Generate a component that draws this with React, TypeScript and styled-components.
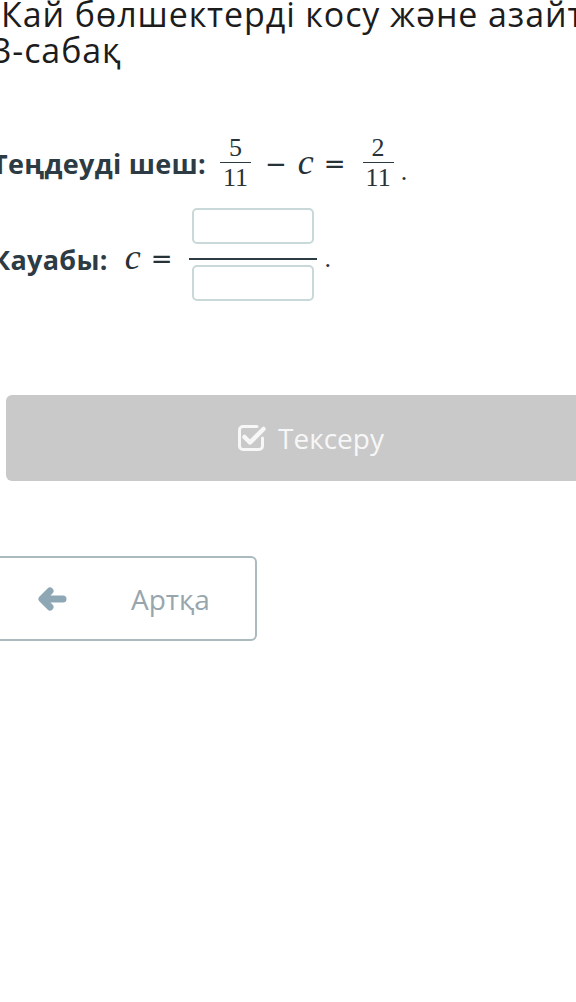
import styled, { createGlobalStyle } from 'styled-components';

const GlobalStyle = createGlobalStyle`
  html, body {
    margin: 0;
    padding: 0;
    background: #ffffff;
    overflow: hidden;
  }
  body {
    font-family: "Open Sans", "Noto Sans", sans-serif;
  }
`;

const Page = styled.div`
  width: 640px;
  margin-left: -8px;
  margin-top: -4px;
`;

const Title = styled.h1`
  margin: 0;
  font-size: 34px;
  line-height: 36px;
  font-weight: 400;
  color: #1c1c1c;
  text-indent: 9px;
  letter-spacing: 0.9px;
`;

const NoWrap = styled.span`
  white-space: nowrap;
`;

const Task = styled.div<{ $top: number }>`
  display: flex;
  align-items: center;
  margin-top: ${(p) => p.$top}px;
`;

const Label = styled.span`
  font-weight: 700;
  font-size: 27px;
  letter-spacing: 0.3px;
  color: #2d3b45;
`;

const Math = styled.span`
  display: inline-flex;
  align-items: center;
  font-family: "Liberation Serif", "DejaVu Serif", serif;
  font-size: 26px;
  color: #263238;
`;

const Var = styled.span<{ $left: number; $right: number }>`
  font-style: italic;
  font-size: 36px;
  line-height: 36px;
  margin: -4px ${(p) => p.$right}px 0 ${(p) => p.$left}px;
`;

const Op = styled.span<{ $right: number }>`
  font-family: "DejaVu Sans", sans-serif;
  font-size: 26px;
  line-height: 30px;
  margin-right: ${(p) => p.$right}px;
`;

const Frac = styled.span<{ $left: number; $right: number }>`
  display: inline-flex;
  flex-direction: column;
  align-items: center;
  margin: 0 ${(p) => p.$right}px 0 ${(p) => p.$left}px;
`;

const Num = styled.span`
  line-height: 22px;
  padding: 0 3px 3px;
`;

const Bar = styled.span<{ $thick: number }>`
  align-self: stretch;
  border-top: ${(p) => p.$thick}px solid #2d3b45;
`;

const Den = styled.span`
  line-height: 24px;
  padding: 3px 3px 0;
`;

const Dot = styled.span<{ $down: number }>`
  font-size: 26px;
  line-height: 20px;
  transform: translateY(${(p) => p.$down}px);
`;

const AnswerFrac = styled.span`
  display: inline-flex;
  flex-direction: column;
  align-items: center;
  width: 128px;
  margin: 0 7px 0 0;
`;

const AnswerBox = styled.input<{ $below: number; $above: number }>`
  box-sizing: border-box;
  width: 122px;
  height: 36px;
  margin: ${(p) => p.$above}px 0 ${(p) => p.$below}px;
  border: 2px solid #c9d8d8;
  border-radius: 5px;
  background: #ffffff;
  outline: none;
`;

const CheckButton = styled.button`
  display: flex;
  align-items: center;
  justify-content: center;
  gap: 12px;
  box-sizing: border-box;
  width: 608px;
  height: 86px;
  margin: 85px 0 0 14px;
  border: none;
  border-radius: 6px;
  background: #c9c9c9;
  color: #f7f7f7;
  font-family: "Open Sans", sans-serif;
  font-size: 28px;
  cursor: default;
`;

const BackButton = styled.button`
  display: flex;
  align-items: center;
  gap: 64px;
  box-sizing: border-box;
  width: 265px;
  height: 85px;
  margin: 75px 0 0 0;
  padding-left: 43px;
  border: 2px solid #abbabe;
  border-radius: 6px;
  background: #ffffff;
  color: #97a6ad;
  font-family: "Open Sans", sans-serif;
  font-size: 28px;
`;

function CheckIcon() {
  return (
    <svg width="30" height="30" viewBox="0 0 30 30" fill="none">
      <path
        d="M21 3.5 H7 a3.5 3.5 0 0 0 -3.5 3.5 v16 a3.5 3.5 0 0 0 3.5 3.5 h16 a3.5 3.5 0 0 0 3.5 -3.5 v-8"
        stroke="#f7f7f7"
        strokeWidth="3"
        strokeLinecap="round"
      />
      <path
        d="M8.5 14 L14 19.5 L27.5 6"
        stroke="#f7f7f7"
        strokeWidth="4.5"
        strokeLinecap="round"
        strokeLinejoin="round"
      />
    </svg>
  );
}

function ArrowLeftIcon() {
  return (
    <svg width="30" height="24" viewBox="0 0 30 24" fill="none">
      <path
        d="M13 4 L5 12 L13 20 M6 12 H26"
        stroke="#8ea7b5"
        strokeWidth="7"
        strokeLinecap="round"
        strokeLinejoin="round"
      />
    </svg>
  );
}

export default function App() {
  return (
    <>
      <GlobalStyle />
      <Page>
        <Title>
          Кай бөлшектерді косу және азайту. <NoWrap>3-сабақ</NoWrap>
        </Title>

        <Task $top={69}>
          <Label>Теңдеуді шеш:</Label>
          <Math>
            <Frac $left={14} $right={14}>
              <Num>5</Num>
              <Bar $thick={1} />
              <Den>11</Den>
            </Frac>
            <Op $right={0}>−</Op>
            <Var $left={11} $right={10}>c</Var>
            <Op $right={17}>=</Op>
            <Frac $left={0} $right={7}>
              <Num>2</Num>
              <Bar $thick={1} />
              <Den>11</Den>
            </Frac>
            <Dot $down={8}>.</Dot>
          </Math>
        </Task>

        <Task $top={18}>
          <Label>Кауабы:</Label>
          <Math>
            <Var $left={17} $right={10}>c</Var>
            <Op $right={17}>=</Op>
            <AnswerFrac>
              <AnswerBox $above={0} $below={14} />
              <Bar $thick={2} />
              <AnswerBox $above={5} $below={9} />
            </AnswerFrac>
            <Dot $down={0}>.</Dot>
          </Math>
        </Task>

        <CheckButton>
          <CheckIcon />
          Тексеру
        </CheckButton>

        <BackButton>
          <ArrowLeftIcon />
          Артқа
        </BackButton>
      </Page>
    </>
  );
}
